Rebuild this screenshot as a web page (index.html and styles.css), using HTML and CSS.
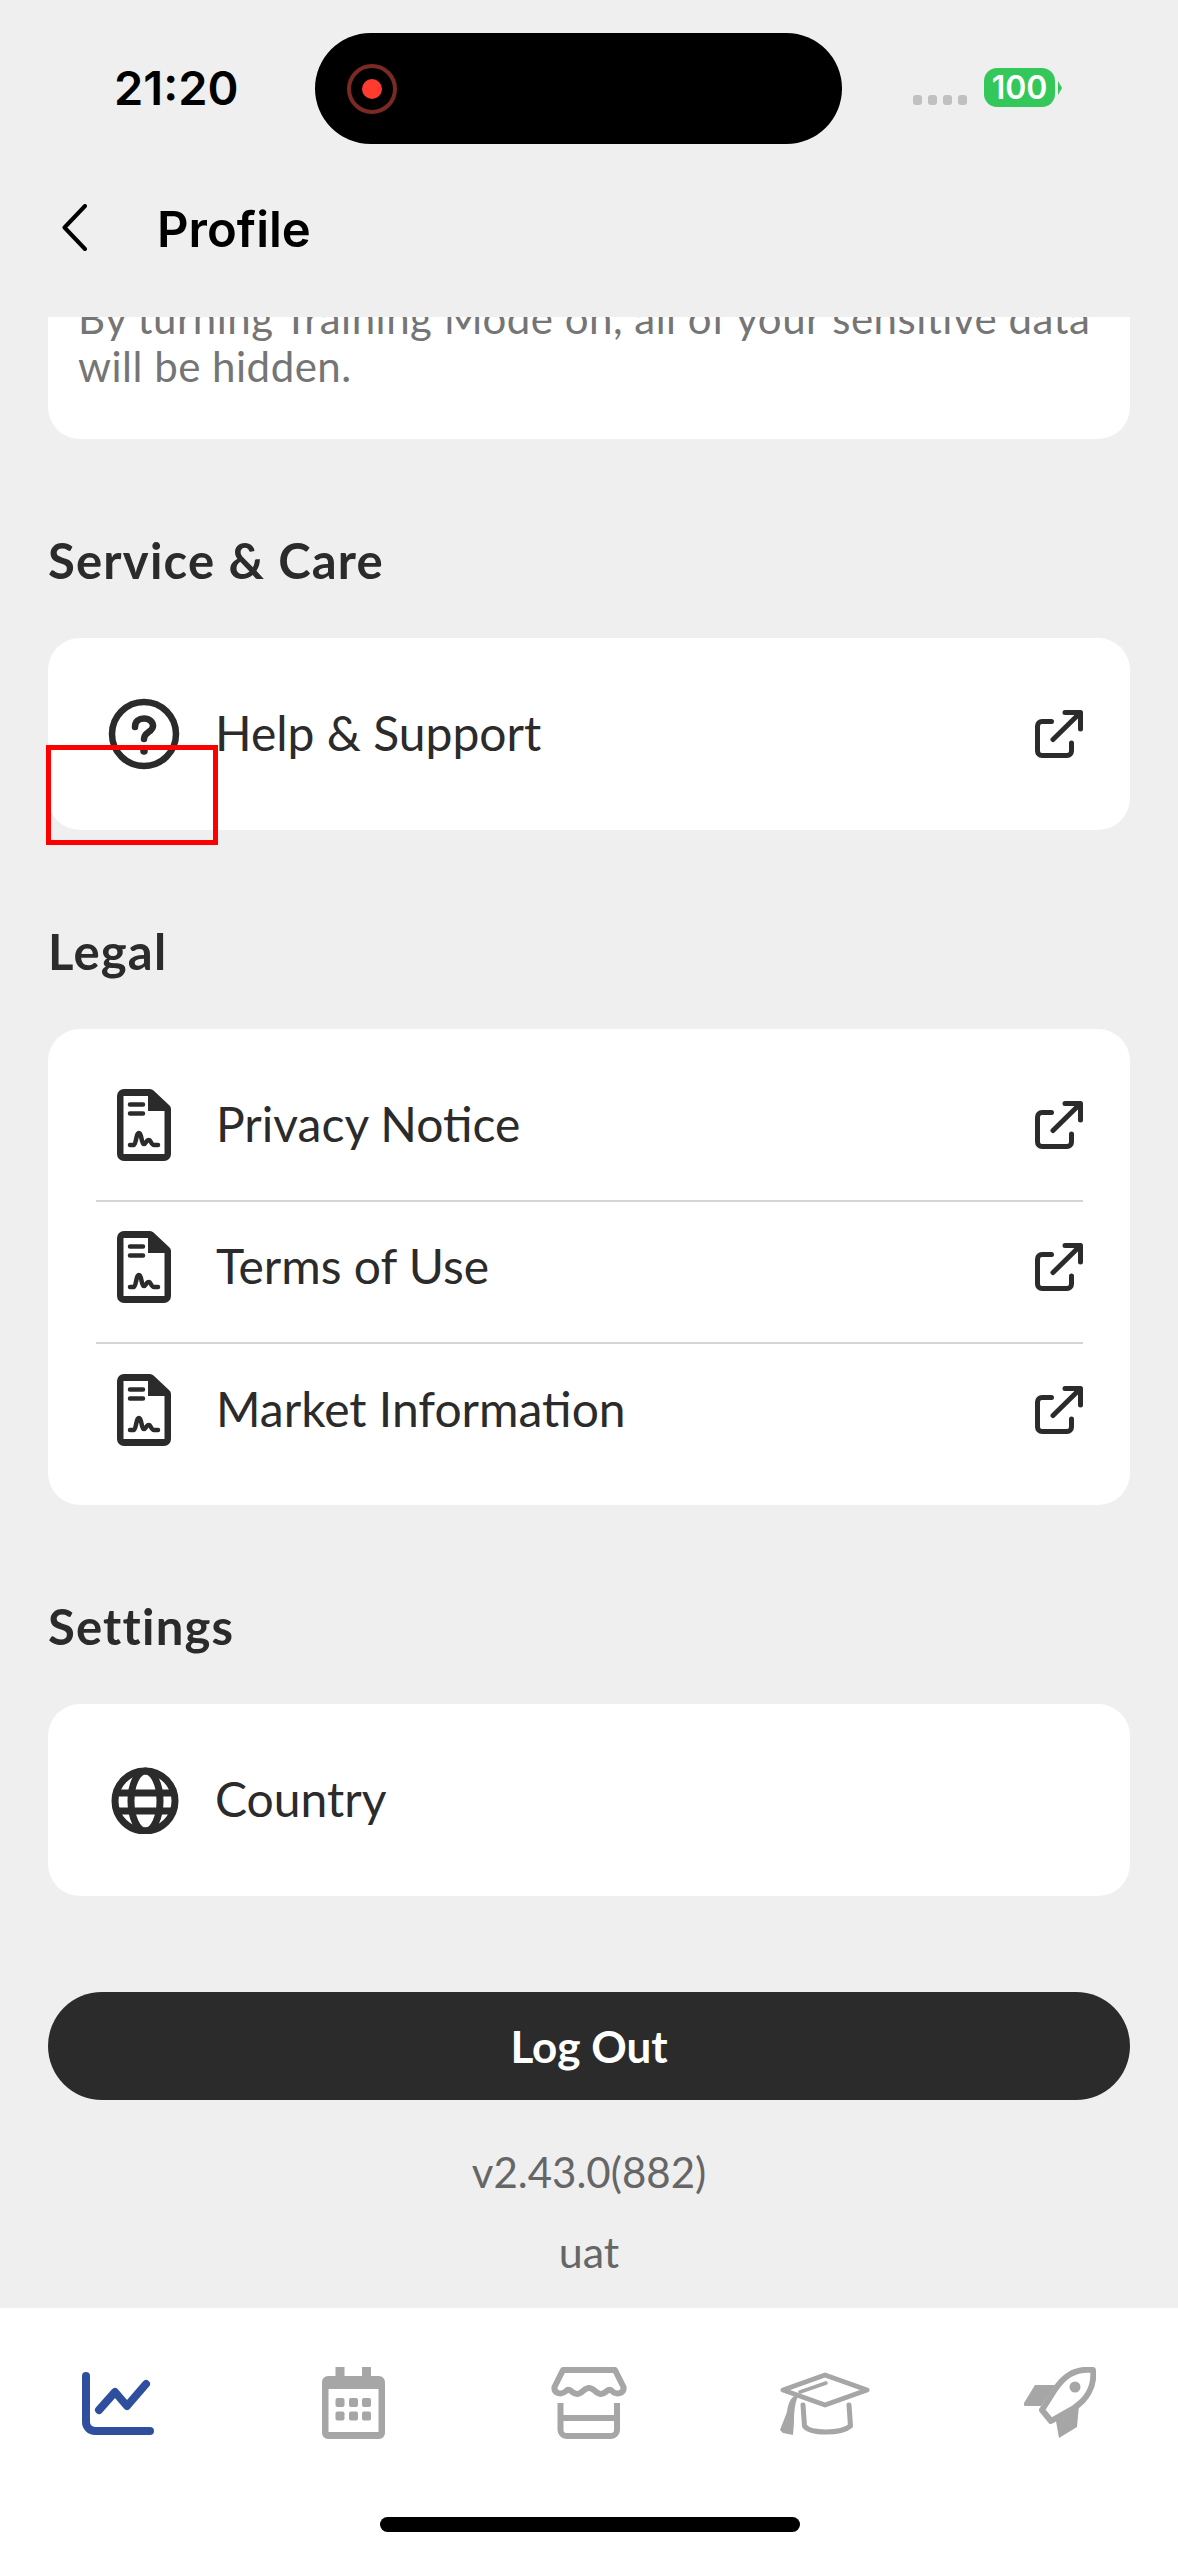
FILE: index.html
```html
<!DOCTYPE html>
<html lang="en">
<head>
  <meta charset="UTF-8">
  <title>Profile</title>
  <link rel="stylesheet" href="styles.css">
</head>
<body>
  <div class="phone">
    <div class="status-bar">
      <span class="time">21:20</span>
      <div class="island">
        <span class="rec-ring"><span class="rec-dot"></span></span>
      </div>
      <div class="status-right">
        <div class="signal"><i></i><i></i><i></i><i></i></div>
        <div class="battery">100</div>
        <span class="battery-nub"></span>
      </div>
    </div>

    <div class="topbar">
      <svg class="back" width="25" height="47" viewBox="0 0 25 47"><path d="M23 2 L2.5 23.5 L23 45" fill="none" stroke="#000" stroke-width="4" stroke-linecap="round" stroke-linejoin="round"/></svg>
      <h1>Profile</h1>
    </div>

    <div class="scroll">
      <div class="card card-clipped">
        <p>By turning Training Mode on, all of your sensitive data<br>will be hidden.</p>
      </div>

      <h2>Service &amp; Care</h2>
      <div class="card">
        <div class="row row-single">
          <span class="row-icon">
            <svg width="72" height="72" viewBox="0 0 72 72"><circle cx="36" cy="36" r="32" fill="none" stroke="#2b2b2b" stroke-width="6.5"/><path d="M27 29 C27 23 31 20.5 36 20.5 C41.500 20.500 45 24 45 28 C45 34 36 34 36 41" fill="none" stroke="#2b2b2b" stroke-width="6.500" stroke-linecap="round"/><circle cx="36" cy="53" r="3.800" fill="#2b2b2b"/></svg>
          </span>
          <span class="row-label">Help &amp; Support</span>
          <svg class="ext" width="48" height="48" viewBox="0 0 48 48"><use href="#ext"/></svg>
        </div>
      </div>

      <h2>Legal</h2>
      <div class="card card-list">
        <div class="row">
          <span class="row-icon"><svg width="54" height="72" viewBox="0 0 54 72"><use href="#doc"/></svg></span>
          <span class="row-label">Privacy Notice</span>
          <svg class="ext" width="48" height="48" viewBox="0 0 48 48"><use href="#ext"/></svg>
        </div>
        <div class="row">
          <span class="row-icon"><svg width="54" height="72" viewBox="0 0 54 72"><use href="#doc"/></svg></span>
          <span class="row-label">Terms of Use</span>
          <svg class="ext" width="48" height="48" viewBox="0 0 48 48"><use href="#ext"/></svg>
        </div>
        <div class="row">
          <span class="row-icon"><svg width="54" height="72" viewBox="0 0 54 72"><use href="#doc"/></svg></span>
          <span class="row-label">Market Information</span>
          <svg class="ext" width="48" height="48" viewBox="0 0 48 48"><use href="#ext"/></svg>
        </div>
      </div>

      <h2>Settings</h2>
      <div class="card">
        <div class="row row-single">
          <span class="row-icon row-icon-globe">
            <svg width="68" height="67" viewBox="0 0 68 67"><g fill="none" stroke="#2b2b2b" stroke-width="7"><circle cx="34" cy="34" r="30"/><ellipse cx="34.500" cy="34" rx="14.500" ry="30"/><path d="M4 26 H64 M4 44 H64"/></g></svg>
          </span>
          <span class="row-label">Country</span>
        </div>
      </div>

      <button class="logout">Log Out</button>
      <div class="version">v2.43.0(882)</div>
      <div class="env">uat</div>
    </div>

    <div class="tabbar">
      <div class="tab">
        <svg width="72" height="63" viewBox="0 0 72 63"><g fill="none" stroke="#2f4f9e" stroke-width="8" stroke-linecap="round" stroke-linejoin="round"><path d="M4 4 V50 a9 9 0 0 0 9 9 H68"/><path d="M17 38 L33 20 L45 34 L64 12"/></g></svg>
      </div>
      <div class="tab">
        <svg width="63" height="72" viewBox="0 0 63 72"><path fill="#a6a6a6" fill-rule="evenodd" d="M13.500 0 H22.500 V9 H40 V0 H49 V9 H57 a6 6 0 0 1 6 6 V66 a6 6 0 0 1 -6 6 H6 a6 6 0 0 1 -6 -6 V15 a6 6 0 0 1 6 -6 H13.500 Z M6.500 22 V65 H56.500 V22 Z"/><g fill="#a6a6a6"><rect x="13.500" y="31" width="9" height="9" rx="2"/><rect x="27" y="31" width="9" height="9" rx="2"/><rect x="40" y="31" width="9" height="9" rx="2"/><rect x="13.500" y="44.500" width="9" height="9" rx="2"/><rect x="27" y="44.500" width="9" height="9" rx="2"/><rect x="40" y="44.500" width="9" height="9" rx="2"/></g></svg>
      </div>
      <div class="tab">
        <svg width="76" height="72" viewBox="0 0 76 72"><g fill="none" stroke="#a6a6a6" stroke-width="6" stroke-linejoin="round"><path d="M12 3 H64 L72.500 20 C73.500 27 65 28 61 24 C57 20 55 27 50 27 C45 27 43 21 38 21 C33 21 31 27 26 27 C21 27 19 20 15 24 C11 28 2.500 27 3.500 20 Z"/><path d="M9.500 36 V63 a6 6 0 0 0 6 6 H60 a6 6 0 0 0 6 -6 V36"/><path d="M9.500 51 H66"/></g></svg>
      </div>
      <div class="tab">
        <svg width="90" height="63" viewBox="0 0 90 63"><g fill="none" stroke="#a6a6a6" stroke-linejoin="round" stroke-linecap="round"><path stroke-width="5" d="M45 3 L87 18 L45 33 L3 18 Z"/><path stroke-width="3.500" d="M20 20 L46 11"/><path stroke-width="5" d="M23 33 L24.500 54 C30 62 61 62 70.500 54 L69 33"/></g><path fill="#a6a6a6" d="M16 23 L18 25 C15 30 14 40 14 50 L13 63 L3 61 L0 58 L7 40 C8 32 10 26 16 23 Z"/></svg>
      </div>
      <div class="tab">
        <svg width="72" height="72" viewBox="0 0 72 72"><path fill="#a6a6a6" d="M11 18 H31 L17 39 H2 a2 2 0 0 1 -2 -3 Z M55 38 L53 60 L35 71 L32 54 Z"/><path fill="#fff" stroke="#a6a6a6" stroke-width="6" stroke-linejoin="round" d="M69 3 C50 1 39 10 30 24 L18 43 L27 54 L50 41 C62 33 71 20 69 3 Z"/><circle cx="51" cy="20" r="5.500" fill="#a6a6a6"/></svg>
      </div>
      <div class="home-bar"></div>
    </div>

    <div class="red-box"></div>
  </div>

  <svg width="0" height="0" class="defs">
    <defs>
      <g id="ext" fill="none" stroke="#2b2b2b" stroke-width="5" stroke-linecap="round" stroke-linejoin="round">
        <path d="M16.500 11.500 H7 a4.500 4.500 0 0 0 -4.500 4.500 V41 a4.500 4.500 0 0 0 4.500 4.500 H32 a4.500 4.500 0 0 0 4.500 -4.500 V33"/>
        <path d="M18 29.500 L45 3"/>
        <path d="M30 2.500 H45.500 V19"/>
      </g>
      <g id="doc">
        <path fill="#2b2b2b" fill-rule="evenodd" d="M7 0 H33 a5 5 0 0 1 3.500 1.500 L52 16 a5 5 0 0 1 2 4 V65 a7 7 0 0 1 -7 7 H7 a7 7 0 0 1 -7 -7 V7 a7 7 0 0 1 7 -7 Z M6.500 7 V65 H47.500 V22 H31 V7 Z"/>
        <path fill="none" stroke="#2b2b2b" stroke-width="4.500" stroke-linecap="round" stroke-linejoin="round" d="M13 15.500 H26 M13 24.500 H26 M13 56 H17 C19 56 19 44 22 44 C25 44 24 55 27 55 C29 55 29 51 32 51 C34 51 34 56 37 56 H41"/>
      </g>
    </defs>
  </svg>
</body>
</html>
```

FILE: styles.css
```css
* {
  box-sizing: border-box;
}

body {
  margin: 0;
  padding: 0;
  background: #efefef;
  font-family: 'Lato', sans-serif;
  color: #2b2b2b;
}

.phone {
  position: relative;
  width: 1178px;
  height: 2556px;
  display: flex;
  flex-direction: column;
  overflow: hidden;
  background: #efefef;
}

.defs {
  position: absolute;
}

/* status bar */
.status-bar {
  height: 178px;
  padding: 33px 0 0 114px;
  display: flex;
  align-items: flex-start;
}

.time {
  width: 201px;
  height: 111px;
  line-height: 110px;
  font-family: 'Inter', sans-serif;
  font-size: 47px;
  font-weight: 600;
  color: #000;
}

.island {
  width: 527px;
  height: 111px;
  padding-left: 32px;
  display: flex;
  align-items: center;
  background: #000;
  border-radius: 56px;
}

.rec-ring {
  width: 50px;
  height: 50px;
  display: flex;
  align-items: center;
  justify-content: center;
  border: 4px solid #7a2a22;
  border-radius: 50%;
}

.rec-dot {
  width: 20px;
  height: 20px;
  background: #ff3b30;
  border-radius: 50%;
}

.status-right {
  margin-left: 71px;
  padding-top: 35px;
  display: flex;
  align-items: flex-end;
}

.signal {
  display: flex;
  gap: 6px;
  padding-bottom: 2px;
  margin-right: 17px;
}

.signal i {
  width: 9px;
  height: 10px;
  background: #c0c0c0;
  border-radius: 3px;
}

.battery {
  width: 71px;
  height: 39px;
  line-height: 39px;
  text-align: center;
  font-family: 'Inter', sans-serif;
  font-size: 32px;
  font-weight: 600;
  color: #fff;
  background: #34c759;
  border-radius: 13px;
}

.battery-nub {
  width: 0;
  height: 0;
  margin: 0 0 12px 3px;
  border-left: 4px solid #34c759;
  border-top: 7px solid transparent;
  border-bottom: 7px solid transparent;
}

/* header */
.topbar {
  height: 139px;
  padding: 26px 0 0 62px;
  display: flex;
  align-items: flex-start;
}

.back {
  flex-shrink: 0;
}

.topbar h1 {
  margin: 2px 0 0 70px;
  line-height: 47px;
  font-family: 'Inter', sans-serif;
  font-size: 49px;
  font-weight: 600;
  color: #000;
}

/* scrolling content */
.scroll {
  flex: 1;
  padding: 0 48px;
  overflow: hidden;
  display: flex;
  flex-direction: column;
  align-items: stretch;
}

.card {
  flex-shrink: 0;
  background: #fff;
  border-radius: 32px;
}

.card-clipped {
  margin-top: -40px;
  height: 162px;
  padding: 17px 30px 0;
}

.card-clipped p {
  margin: 0;
  font-size: 42px;
  letter-spacing: 0.5px;
  line-height: 48px;
  white-space: nowrap;
  color: #757575;
}

h2 {
  margin: 92px 0 48px;
  height: 59px;
  line-height: 59px;
  font-size: 49px;
  letter-spacing: 1.2px;
  font-weight: 700;
}

.row {
  height: 142px;
  padding: 0 47px 10px 48px;
  margin: 0;
  display: flex;
  align-items: center;
  border-bottom: 2px solid #d4d4d4;
}

.card-list {
  padding: 31px 0 19px;
}

.card-list .row {
  margin: 0 47px 0 48px;
  padding: 0 0 10px;
}

.card-list .row:last-child {
  border-bottom: none;
}

.row-single {
  height: 192px;
  padding: 0 47px 0 48px;
  border-bottom: none;
}

.row-icon {
  width: 119px;
  padding-left: 12px;
  flex-shrink: 0;
  display: flex;
  justify-content: flex-start;
}

.row-icon-globe {
  padding-left: 15px;
}

.card-list .row-icon {
  width: 120px;
  padding-left: 21px;
}

.row-label {
  flex: 1;
  padding-bottom: 3px;
  font-size: 48px;
}

.ext {
  flex-shrink: 0;
}

.logout {
  flex-shrink: 0;
  margin-top: 96px;
  height: 108px;
  padding-bottom: 2px;
  font-family: inherit;
  font-size: 44px;
  font-weight: 700;
  color: #fff;
  background: #2b2b2b;
  border: none;
  border-radius: 54px;
}

.version {
  margin-top: 50px;
  text-align: center;
  line-height: 44px;
  font-size: 42px;
  color: #666;
}

.env {
  margin-top: 36px;
  text-align: center;
  line-height: 44px;
  font-size: 43px;
  color: #666;
}

/* bottom tabs */
.tabbar {
  position: relative;
  height: 248px;
  padding-top: 57px;
  flex-shrink: 0;
  display: grid;
  grid-template-columns: repeat(5, 1fr);
  align-items: start;
  background: #fff;
}

.tab {
  height: 76px;
  display: flex;
  align-items: center;
  justify-content: center;
}

.home-bar {
  position: absolute;
  left: 380px;
  bottom: 24px;
  width: 420px;
  height: 15px;
  background: #000;
  border-radius: 8px;
}

/* annotation box drawn over the screenshot */
.red-box {
  position: absolute;
  left: 46px;
  top: 745px;
  width: 172px;
  height: 100px;
  border: 5px solid #f00;
}
```
